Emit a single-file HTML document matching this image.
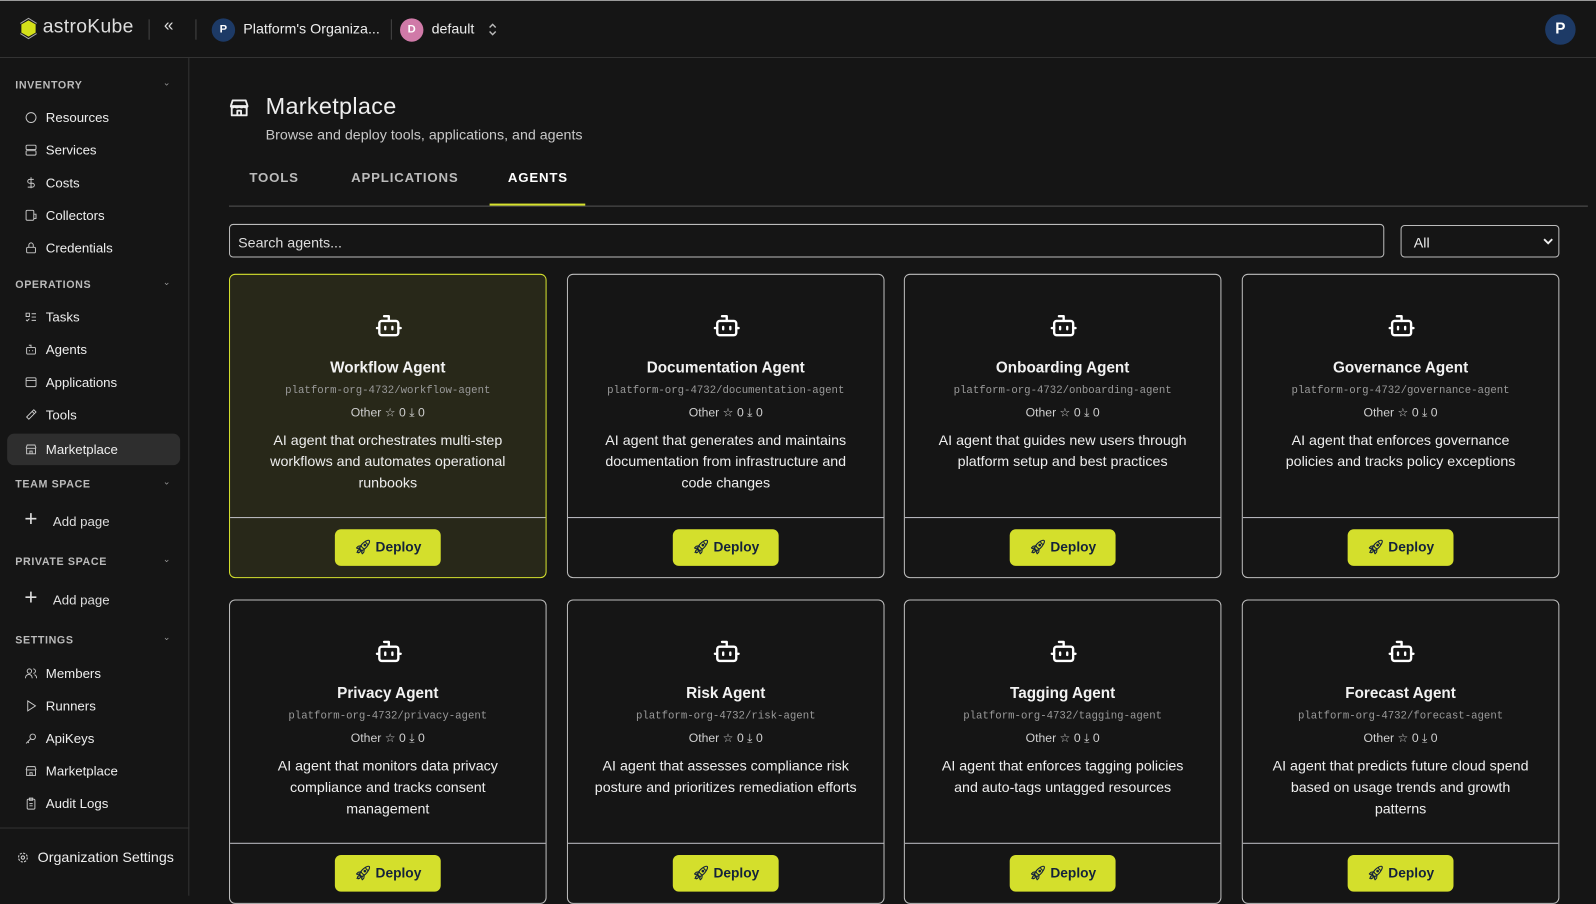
<!DOCTYPE html>
<html><head><meta charset="utf-8"><style>
*{box-sizing:border-box;margin:0;padding:0}
html,body{width:1596px;height:880px;overflow:hidden;background:#151515}
body{color:#e8e8e8;font-family:"Liberation Sans",sans-serif;border-top:1px solid #9a9a9a}
#w{position:absolute;left:0;top:0;width:1568px;height:865px;transform:scale(1.017857);transform-origin:0 0}
.hdr{position:absolute;left:0;top:1px;width:1568px;height:56px;border-bottom:1px solid #333;}
.side{position:absolute;left:0;top:57px;width:186px;height:823px;border-right:1px solid #333}
.abs{position:absolute}
.sec{position:absolute;left:15px;font-size:10.5px;font-weight:bold;letter-spacing:.6px;color:#bbb}
.chev{position:absolute;left:160px;font-size:9px;color:#999}
.it{position:absolute;left:7px;width:170px;height:31px;display:flex;align-items:center;padding-left:17px;font-size:13px;color:#eee;border-radius:7px}
.it svg{width:13px;height:13px;margin-right:8px;stroke:#ccc;fill:none;stroke-width:1.7}
.it.act{background:#2e2e2e}
.card{position:absolute;width:312px;height:299px;border:1px solid #bdbdbd;border-radius:6px;background:#151515;text-align:center;overflow:hidden}
.card.hl{background:#282819;border-color:#d6e22e}
.card svg.bot{position:absolute;left:142px;top:36px;width:28px;height:28px;stroke:#fff;fill:none;stroke-width:2;stroke-linecap:round;stroke-linejoin:round}
.card h3{position:absolute;top:83px;width:100%;font-size:15px;font-weight:bold;color:#f2f2f2}
.card .slug{position:absolute;top:108px;width:100%;font-family:"Liberation Mono",monospace;font-size:10.5px;color:#9a9a9a}
.card .meta{position:absolute;top:128px;width:100%;font-size:12px;color:#cfcfcf}
.card p{position:absolute;top:152px;left:25px;right:25px;font-size:14px;line-height:21px;color:#eee}
.card .foot{position:absolute;top:238px;left:0;right:0;border-top:1px solid #c0c0c8}
.dep{position:absolute;top:250px;left:103px;width:104px;height:36px;background:#d4df2c;border-radius:6px;color:#14223a;font-weight:bold;font-size:13.5px;display:flex;align-items:center;justify-content:center;gap:6px}
</style></head><body><div id="w">
<div class="hdr">
 <svg class="abs" style="left:17px;top:16px" width="22" height="22" viewBox="0 0 22 22"><polygon points="11,3 18,7 18,15 11,19 4,15 4,7" fill="#d4e01a"/><polyline points="3,6 11,1 19,6" fill="none" stroke="#aaa" stroke-width="1"/><polyline points="3,16 11,21 19,16" fill="none" stroke="#aaa" stroke-width="1"/></svg>
 <div class="abs" style="left:42px;top:15px;font-size:19px;color:#ddd;letter-spacing:.3px">astroKube</div>
 <div class="abs" style="left:146px;top:18px;width:1px;height:20px;background:#444"></div>
 <div class="abs" style="left:161px;top:14px;font-size:17px;color:#ddd">«</div>
 <div class="abs" style="left:192px;top:18px;width:1px;height:20px;background:#444"></div>
 <div class="abs" style="left:208px;top:17px;width:23px;height:23px;border-radius:50%;background:#1d3a66;color:#fff;font-size:11px;font-weight:bold;text-align:center;line-height:23px">P</div>
 <div class="abs" style="left:239px;top:19px;font-size:14px;color:#eee">Platform's Organiza...</div>
 <div class="abs" style="left:384px;top:18px;width:1px;height:20px;background:#444"></div>
 <div class="abs" style="left:393px;top:17px;width:23px;height:23px;border-radius:50%;background:#d07aa8;color:#fff;font-size:11px;font-weight:bold;text-align:center;line-height:23px">D</div>
 <div class="abs" style="left:424px;top:19px;font-size:14px;color:#eee">default</div>
 <svg class="abs" style="left:478px;top:21px" width="12" height="14" viewBox="0 0 12 14" fill="none" stroke="#bbb" stroke-width="1.4"><polyline points="3,5 6,2 9,5"/><polyline points="3,9 6,12 9,9"/></svg>
 <div class="abs" style="left:1518px;top:13px;width:30px;height:30px;border-radius:50%;background:#1d3a66;color:#fff;font-size:15px;font-weight:bold;text-align:center;line-height:30px">P</div>
</div>
<div class="side">
 <div class="sec" style="top:21px">INVENTORY</div><div class="chev" style="top:19px">⌄</div>
 <div class="it" style="top:43px"><svg viewBox="0 0 24 24"><circle cx="12" cy="12" r="9"/></svg>Resources</div>
 <div class="it" style="top:75px"><svg viewBox="0 0 24 24"><rect x="3" y="3" width="18" height="8" rx="2"/><rect x="3" y="13" width="18" height="8" rx="2"/></svg>Services</div>
 <div class="it" style="top:107px"><svg viewBox="0 0 24 24"><path d="M12 2v20M17 6H9.5a3.5 3.5 0 0 0 0 7h5a3.5 3.5 0 0 1 0 7H6"/></svg>Costs</div>
 <div class="it" style="top:139px"><svg viewBox="0 0 24 24"><rect x="3" y="3" width="14" height="18" rx="2"/><path d="M17 10h4v8h-4"/></svg>Collectors</div>
 <div class="it" style="top:171px"><svg viewBox="0 0 24 24"><rect x="4" y="11" width="16" height="10" rx="2"/><path d="M8 11V7a4 4 0 0 1 8 0v4"/></svg>Credentials</div>
 <div class="sec" style="top:217px">OPERATIONS</div><div class="chev" style="top:215px">⌄</div>
 <div class="it" style="top:239px"><svg viewBox="0 0 24 24"><path d="M3 5h6v6H3zM13 6h8M13 12h8M13 18h8M3 17l2 2 4-4"/></svg>Tasks</div>
 <div class="it" style="top:271px"><svg viewBox="0 0 24 24"><rect x="4" y="8" width="16" height="12" rx="2"/><path d="M12 8V4H8M9 13v2M15 13v2"/></svg>Agents</div>
 <div class="it" style="top:303px"><svg viewBox="0 0 24 24"><rect x="3" y="4" width="18" height="16" rx="2"/><path d="M3 9h18"/></svg>Applications</div>
 <div class="it" style="top:335px"><svg viewBox="0 0 24 24"><path d="M14 6l4 4-10 10-4-4zM14 6l3-3 4 4-3 3"/></svg>Tools</div>
 <div class="it act" style="top:369px"><svg viewBox="0 0 24 24"><path d="M4 10h16v10H4zM3 10l2-6h14l2 6M10 20v-5h4v5"/></svg>Marketplace</div>
 <div class="sec" style="top:413px">TEAM SPACE</div><div class="chev" style="top:411px">⌄</div>
 <div class="abs" style="left:24px;top:443px;font-size:22px;color:#ddd;line-height:20px">+</div>
 <div class="abs" style="left:52px;top:448px;font-size:13px;color:#ddd">Add page</div>
 <div class="sec" style="top:489px">PRIVATE SPACE</div><div class="chev" style="top:487px">⌄</div>
 <div class="abs" style="left:24px;top:520px;font-size:22px;color:#ddd;line-height:20px">+</div>
 <div class="abs" style="left:52px;top:525px;font-size:13px;color:#ddd">Add page</div>
 <div class="sec" style="top:566px">SETTINGS</div><div class="chev" style="top:564px">⌄</div>
 <div class="it" style="top:589px"><svg viewBox="0 0 24 24"><circle cx="9" cy="8" r="4"/><path d="M2 21v-1a6 6 0 0 1 12 0v1M16 4a4 4 0 0 1 0 8M22 21v-1a6 6 0 0 0-4-5.6"/></svg>Members</div>
 <div class="it" style="top:621px"><svg viewBox="0 0 24 24"><path d="M6 3l14 9-14 9z"/></svg>Runners</div>
 <div class="it" style="top:653px"><svg viewBox="0 0 24 24"><circle cx="15" cy="9" r="5"/><path d="M11 13l-8 8M6 18l2 2"/></svg>ApiKeys</div>
 <div class="it" style="top:685px"><svg viewBox="0 0 24 24"><path d="M4 10h16v10H4zM3 10l2-6h14l2 6M10 20v-5h4v5"/></svg>Marketplace</div>
 <div class="it" style="top:717px"><svg viewBox="0 0 24 24"><rect x="5" y="4" width="14" height="18" rx="2"/><path d="M9 2h6v4H9zM9 12h6M9 16h6"/></svg>Audit Logs</div>
 <div class="abs" style="left:0;top:756px;width:186px;height:1px;background:#333"></div>
 <div class="abs" style="left:16px;top:777px;font-size:14px;color:#eee;display:flex;align-items:center"><svg width="13" height="13" viewBox="0 0 24 24" fill="none" stroke="#ccc" stroke-width="2" style="margin-right:8px"><circle cx="12" cy="12" r="3"/><circle cx="12" cy="12" r="8" stroke-dasharray="4 2.3"/></svg>Organization Settings</div>
</div>

<svg class="abs" style="left:224px;top:95px" width="22" height="22" viewBox="0 0 24 24" fill="none" stroke="#eee" stroke-width="2" stroke-linejoin="round"><path d="M4 10h16v10H4zM3 10l2-6h14l2 6M10 20v-5h4v5M3 10c0 2 4 2 4 0 0 2 5 2 5 0 0 2 5 2 5 0 0 2 4 2 4 0"/></svg>
<div class="abs" style="left:261px;top:91px;font-size:23px;color:#eee;letter-spacing:.3px">Marketplace</div>
<div class="abs" style="left:261px;top:124px;font-size:14px;color:#c8c8c8">Browse and deploy tools, applications, and agents</div>
<div class="abs" style="left:245px;top:167px;font-size:13px;font-weight:bold;letter-spacing:.8px;color:#bbb">TOOLS</div>
<div class="abs" style="left:345px;top:167px;font-size:13px;font-weight:bold;letter-spacing:.8px;color:#bbb">APPLICATIONS</div>
<div class="abs" style="left:499px;top:167px;font-size:13px;font-weight:bold;letter-spacing:.8px;color:#fff">AGENTS</div>
<div class="abs" style="left:225px;top:202px;width:1335px;height:1px;background:#555"></div>
<div class="abs" style="left:481px;top:200px;width:94px;height:2px;background:#d6e22e"></div>
<div class="abs" style="left:225px;top:220px;width:1135px;height:33px;border:1px solid #bbb;border-radius:4px;padding:9px 8px;font-size:14px;color:#ddd">Search agents...</div>
<div class="abs" style="left:1376px;top:221px;width:156px;height:32px;border:1px solid #bbb;border-radius:4px;padding:8px 12px;font-size:14px;color:#eee">All<svg style="position:absolute;right:5px;top:11px" width="10" height="8" viewBox="0 0 10 8" fill="none" stroke="#eee" stroke-width="1.8"><polyline points="1,2 5,6 9,2"/></svg></div>

<div class="card hl" style="left:225px;top:269px"><svg class="bot" viewBox="0 0 24 24"><path d="M12 8V4H8"/><rect x="4" y="8" width="16" height="12" rx="2"/><path d="M2 14h2M20 14h2M15 13v2M9 13v2"/></svg><h3>Workflow Agent</h3><div class="slug">platform-org-4732/workflow-agent</div><div class="meta">Other ☆ 0 ⤓ 0</div><p>AI agent that orchestrates multi-step workflows and automates operational runbooks</p><div class="foot"></div><div class="dep">🚀︎ Deploy</div></div>
<div class="card" style="left:557px;top:269px"><svg class="bot" viewBox="0 0 24 24"><path d="M12 8V4H8"/><rect x="4" y="8" width="16" height="12" rx="2"/><path d="M2 14h2M20 14h2M15 13v2M9 13v2"/></svg><h3>Documentation Agent</h3><div class="slug">platform-org-4732/documentation-agent</div><div class="meta">Other ☆ 0 ⤓ 0</div><p>AI agent that generates and maintains documentation from infrastructure and code changes</p><div class="foot"></div><div class="dep">🚀︎ Deploy</div></div>
<div class="card" style="left:888px;top:269px"><svg class="bot" viewBox="0 0 24 24"><path d="M12 8V4H8"/><rect x="4" y="8" width="16" height="12" rx="2"/><path d="M2 14h2M20 14h2M15 13v2M9 13v2"/></svg><h3>Onboarding Agent</h3><div class="slug">platform-org-4732/onboarding-agent</div><div class="meta">Other ☆ 0 ⤓ 0</div><p>AI agent that guides new users through platform setup and best practices</p><div class="foot"></div><div class="dep">🚀︎ Deploy</div></div>
<div class="card" style="left:1220px;top:269px"><svg class="bot" viewBox="0 0 24 24"><path d="M12 8V4H8"/><rect x="4" y="8" width="16" height="12" rx="2"/><path d="M2 14h2M20 14h2M15 13v2M9 13v2"/></svg><h3>Governance Agent</h3><div class="slug">platform-org-4732/governance-agent</div><div class="meta">Other ☆ 0 ⤓ 0</div><p>AI agent that enforces governance policies and tracks policy exceptions</p><div class="foot"></div><div class="dep">🚀︎ Deploy</div></div>
<div class="card" style="left:225px;top:589px"><svg class="bot" viewBox="0 0 24 24"><path d="M12 8V4H8"/><rect x="4" y="8" width="16" height="12" rx="2"/><path d="M2 14h2M20 14h2M15 13v2M9 13v2"/></svg><h3>Privacy Agent</h3><div class="slug">platform-org-4732/privacy-agent</div><div class="meta">Other ☆ 0 ⤓ 0</div><p>AI agent that monitors data privacy compliance and tracks consent management</p><div class="foot"></div><div class="dep">🚀︎ Deploy</div></div>
<div class="card" style="left:557px;top:589px"><svg class="bot" viewBox="0 0 24 24"><path d="M12 8V4H8"/><rect x="4" y="8" width="16" height="12" rx="2"/><path d="M2 14h2M20 14h2M15 13v2M9 13v2"/></svg><h3>Risk Agent</h3><div class="slug">platform-org-4732/risk-agent</div><div class="meta">Other ☆ 0 ⤓ 0</div><p>AI agent that assesses compliance risk posture and prioritizes remediation efforts</p><div class="foot"></div><div class="dep">🚀︎ Deploy</div></div>
<div class="card" style="left:888px;top:589px"><svg class="bot" viewBox="0 0 24 24"><path d="M12 8V4H8"/><rect x="4" y="8" width="16" height="12" rx="2"/><path d="M2 14h2M20 14h2M15 13v2M9 13v2"/></svg><h3>Tagging Agent</h3><div class="slug">platform-org-4732/tagging-agent</div><div class="meta">Other ☆ 0 ⤓ 0</div><p>AI agent that enforces tagging policies and auto-tags untagged resources</p><div class="foot"></div><div class="dep">🚀︎ Deploy</div></div>
<div class="card" style="left:1220px;top:589px"><svg class="bot" viewBox="0 0 24 24"><path d="M12 8V4H8"/><rect x="4" y="8" width="16" height="12" rx="2"/><path d="M2 14h2M20 14h2M15 13v2M9 13v2"/></svg><h3>Forecast Agent</h3><div class="slug">platform-org-4732/forecast-agent</div><div class="meta">Other ☆ 0 ⤓ 0</div><p>AI agent that predicts future cloud spend based on usage trends and growth patterns</p><div class="foot"></div><div class="dep">🚀︎ Deploy</div></div>
</div></body></html>
